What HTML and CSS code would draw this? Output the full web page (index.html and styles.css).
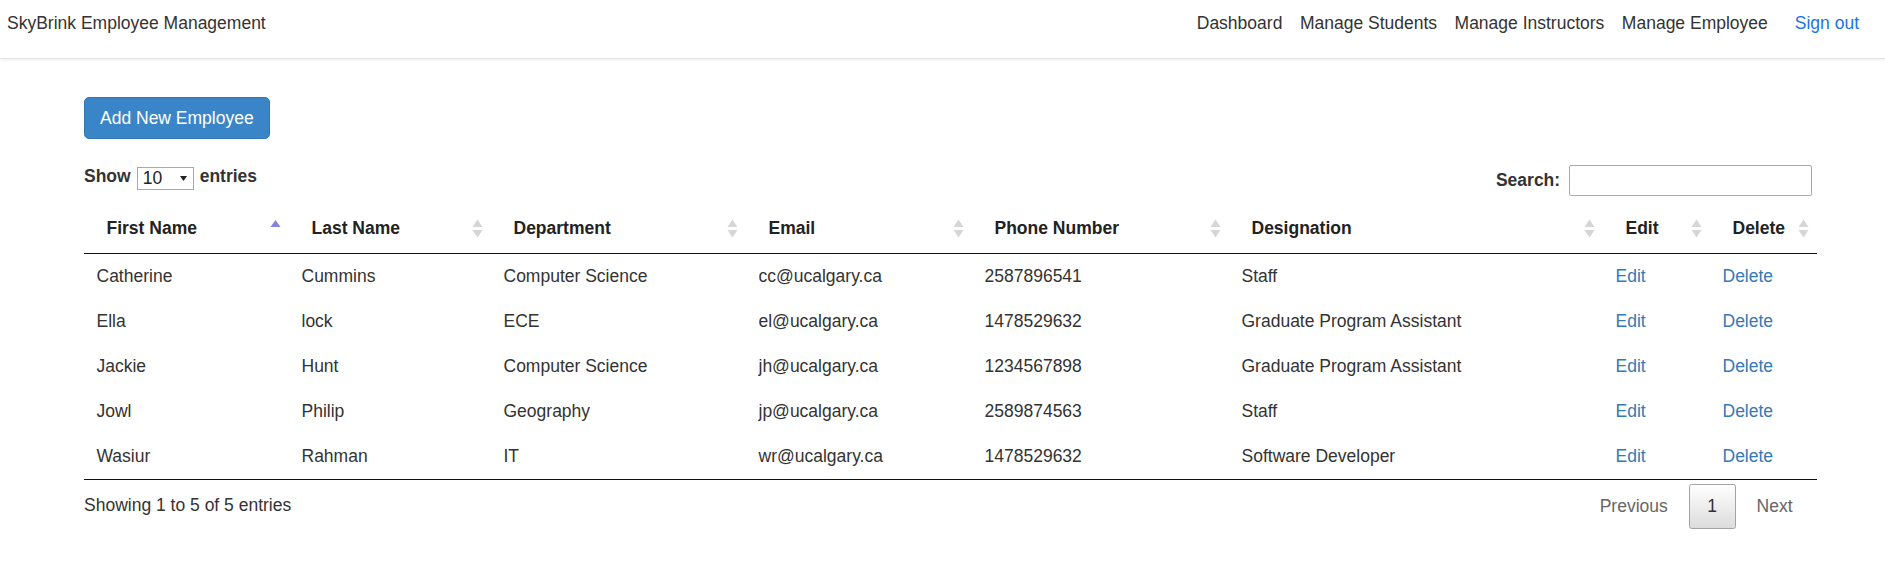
FILE: index.html
```html
<!DOCTYPE html>
<html lang="en">
<head>
<meta charset="utf-8">
<title>SkyBrink Employee Management</title>
<link rel="stylesheet" href="styles.css">
</head>
<body>
<header class="navbar">
  <a class="brand" href="#">SkyBrink Employee Management</a>
  <nav class="nav">
    <a class="nav-link" href="#">Dashboard</a>
    <a class="nav-link" href="#">Manage Students</a>
    <a class="nav-link" href="#">Manage Instructors</a>
    <a class="nav-link" href="#">Manage Employee</a>
    <a class="nav-link signout" href="#">Sign out</a>
  </nav>
</header>

<main class="main">
  <button class="btn-primary" type="button">Add New Employee</button>

  <div class="controls">
    <label class="length">Show
      <span class="select-wrap">
        <select class="length-select"><option>10</option><option>25</option><option>50</option><option>100</option></select>
        <svg class="select-arrow" width="7" height="5" viewBox="0 0 7 5"><polygon points="0,0 7,0 3.5,5" fill="#222"/></svg>
      </span>
      entries</label>
    <label class="filter">Search: <input class="search" type="search"></label>
  </div>

  <table class="data">
    <colgroup>
      <col class="c1"><col class="c2"><col class="c3"><col class="c4"><col class="c5"><col class="c6"><col class="c7"><col class="c8">
    </colgroup>
    <thead>
      <tr>
        <th><div class="th-inner"><span>First Name</span><svg class="sort" width="11" height="19" viewBox="0 0 11 19"><polygon points="0.5,8 5.5,1 10.5,8" fill="#8585dc"/></svg></div></th>
        <th><div class="th-inner"><span>Last Name</span><svg class="sort" width="11" height="19" viewBox="0 0 11 19"><polygon points="0.5,8 5.5,0.5 10.5,8" fill="#d6d6d6"/><polygon points="0.5,11 10.5,11 5.5,18.5" fill="#d6d6d6"/></svg></div></th>
        <th><div class="th-inner"><span>Department</span><svg class="sort" width="11" height="19" viewBox="0 0 11 19"><polygon points="0.5,8 5.5,0.5 10.5,8" fill="#d6d6d6"/><polygon points="0.5,11 10.5,11 5.5,18.5" fill="#d6d6d6"/></svg></div></th>
        <th><div class="th-inner"><span>Email</span><svg class="sort" width="11" height="19" viewBox="0 0 11 19"><polygon points="0.5,8 5.5,0.5 10.5,8" fill="#d6d6d6"/><polygon points="0.5,11 10.5,11 5.5,18.5" fill="#d6d6d6"/></svg></div></th>
        <th><div class="th-inner"><span>Phone Number</span><svg class="sort" width="11" height="19" viewBox="0 0 11 19"><polygon points="0.5,8 5.5,0.5 10.5,8" fill="#d6d6d6"/><polygon points="0.5,11 10.5,11 5.5,18.5" fill="#d6d6d6"/></svg></div></th>
        <th><div class="th-inner"><span>Designation</span><svg class="sort" width="11" height="19" viewBox="0 0 11 19"><polygon points="0.5,8 5.5,0.5 10.5,8" fill="#d6d6d6"/><polygon points="0.5,11 10.5,11 5.5,18.5" fill="#d6d6d6"/></svg></div></th>
        <th><div class="th-inner"><span>Edit</span><svg class="sort" width="11" height="19" viewBox="0 0 11 19"><polygon points="0.5,8 5.5,0.5 10.5,8" fill="#d6d6d6"/><polygon points="0.5,11 10.5,11 5.5,18.5" fill="#d6d6d6"/></svg></div></th>
        <th><div class="th-inner"><span>Delete</span><svg class="sort" width="11" height="19" viewBox="0 0 11 19"><polygon points="0.5,8 5.5,0.5 10.5,8" fill="#d6d6d6"/><polygon points="0.5,11 10.5,11 5.5,18.5" fill="#d6d6d6"/></svg></div></th>
      </tr>
    </thead>
    <tbody>
      <tr><td>Catherine</td><td>Cummins</td><td>Computer Science</td><td>cc@ucalgary.ca</td><td>2587896541</td><td>Staff</td><td><a href="#">Edit</a></td><td><a href="#">Delete</a></td></tr>
      <tr><td>Ella</td><td>lock</td><td>ECE</td><td>el@ucalgary.ca</td><td>1478529632</td><td>Graduate Program Assistant</td><td><a href="#">Edit</a></td><td><a href="#">Delete</a></td></tr>
      <tr><td>Jackie</td><td>Hunt</td><td>Computer Science</td><td>jh@ucalgary.ca</td><td>1234567898</td><td>Graduate Program Assistant</td><td><a href="#">Edit</a></td><td><a href="#">Delete</a></td></tr>
      <tr><td>Jowl</td><td>Philip</td><td>Geography</td><td>jp@ucalgary.ca</td><td>2589874563</td><td>Staff</td><td><a href="#">Edit</a></td><td><a href="#">Delete</a></td></tr>
      <tr><td>Wasiur</td><td>Rahman</td><td>IT</td><td>wr@ucalgary.ca</td><td>1478529632</td><td>Software Developer</td><td><a href="#">Edit</a></td><td><a href="#">Delete</a></td></tr>
    </tbody>
  </table>

  <div class="footer">
    <div class="info">Showing 1 to 5 of 5 entries</div>
    <div class="paginate">
      <a class="page-btn disabled" href="#">Previous</a>
      <a class="page-btn current" href="#">1</a>
      <a class="page-btn disabled" href="#">Next</a>
    </div>
  </div>
</main>
</body>
</html>
```

FILE: styles.css
```css
* { box-sizing: border-box; }

html, body {
  margin: 0;
  padding: 0;
  background: #fff;
}

body {
  font-family: "Liberation Sans", Arial, Helvetica, sans-serif;
  font-size: 17.5px;
  line-height: 25px;
  color: #333;
}

a { text-decoration: none; }

/* Navbar */
.navbar {
  height: 59px;
  display: flex;
  justify-content: space-between;
  align-items: flex-start;
  padding: 11px 26px 0 7px;
  border-bottom: 1px solid #e3e3e3;
  box-shadow: 0 1px 4px rgba(0, 0, 0, 0.07);
}

.brand { color: #333; }

.nav {
  display: flex;
  gap: 17.5px;
}

.nav-link { color: #333; }

.nav-link.signout {
  color: #1a73e8;
  margin-left: 9.5px;
}

/* Main */
.main {
  padding: 38px 68px 0 84px;
}

.btn-primary {
  display: block;
  height: 42px;
  padding: 0 15px;
  font-family: inherit;
  font-size: 17.5px;
  line-height: 25px;
  color: #fff;
  background: #3a85c7;
  border: 1.25px solid #3277b5;
  border-radius: 5px;
  cursor: pointer;
}

.controls {
  display: flex;
  justify-content: space-between;
  align-items: flex-start;
  margin-top: 25px;
}

.length {
  display: flex;
  align-items: center;
  gap: 6px;
  height: 25px;
  font-weight: bold;
}

.select-wrap {
  position: relative;
  display: block;
  width: 57px;
  height: 23px;
  margin-top: 1px;
}

.length-select {
  appearance: none;
  -webkit-appearance: none;
  width: 57px;
  height: 23px;
  padding: 0 0 0 5px;
  font-family: inherit;
  font-size: 17.5px;
  line-height: 21px;
  color: #222;
  background: #fff;
  border: 1px solid #a9a9a9;
  border-radius: 0;
}

.select-arrow {
  position: absolute;
  left: 43px;
  top: 10px;
  pointer-events: none;
}

.filter {
  display: flex;
  align-items: center;
  height: 31px;
  margin-top: 1px;
  margin-right: 5px;
  font-weight: bold;
  white-space: pre;
}

.search {
  width: 243px;
  height: 31px;
  margin-left: 4px;
  padding: 5px;
  font-family: inherit;
  font-size: 17.5px;
  border: 1px solid #aaa;
  border-radius: 2px;
  outline: none;
}

/* Table */
.data {
  width: 1733px;
  margin-top: 7px;
  table-layout: fixed;
  border-collapse: collapse;
  border-spacing: 0;
  border-bottom: 1px solid #111;
}

.c1 { width: 205px; }
.c2 { width: 202px; }
.c3 { width: 255px; }
.c4 { width: 226px; }
.c5 { width: 257px; }
.c6 { width: 374px; }
.c7 { width: 107px; }
.c8 { width: 107px; }

.data th {
  padding: 12.5px 8.5px 12.5px 22.5px;
  text-align: left;
  font-weight: bold;
  color: #222;
  border-bottom: 1px solid #111;
}

.th-inner {
  display: flex;
  justify-content: space-between;
  align-items: center;
  height: 25px;
}

.sort {
  display: block;
  flex: none;
}

.data td {
  padding: 10px 12.5px;
  height: 45px;
  color: #333;
  white-space: nowrap;
}

.data td a { color: #337ab7; }

/* Footer */
.footer {
  display: flex;
  justify-content: space-between;
  align-items: flex-start;
}

.info {
  padding-top: 13px;
  color: #333;
}

.paginate {
  display: flex;
  padding-top: 4px;
  margin-right: 6px;
}

.page-btn {
  display: block;
  min-width: 26px;
  margin-left: 2.5px;
  padding: 8.75px 17.5px;
  line-height: 25px;
  text-align: center;
  border: 1px solid transparent;
  border-radius: 2.5px;
  color: #333;
}

.page-btn.disabled { color: #666; }

.page-btn.current {
  color: #333;
  border: 1px solid #a3a3a3;
  background: linear-gradient(to bottom, #ffffff 0%, #dcdcdc 100%);
}
```
